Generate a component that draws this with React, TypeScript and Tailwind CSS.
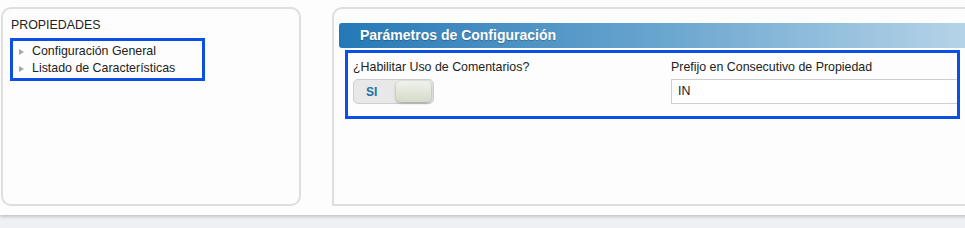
import React from "react";

export default function App() {
  const font = { fontFamily: '"Liberation Sans", Arial, sans-serif' };
  return (
    <div className="w-[965px] h-[228px] overflow-hidden bg-[#eef0f4]" style={font}>
      <div className="w-[1000px] h-[215px] bg-[#fdfdfd] shadow-[0_2px_3px_rgba(0,0,0,0.18)] pt-[7px] pl-[1px] flex gap-[31px]">
        {/* Left panel */}
        <div className="w-[300px] h-[199px] border-2 border-[#dedede] rounded-[10px] bg-[#fdfdfd] pl-[8px] pt-[9px]">
          <div className="text-[12.4px] leading-[15px] text-[#222]">PROPIEDADES</div>
          <div className="mt-[5px] -ml-[1px] w-[195px] h-[43px] border-[3px] border-[#0b50e6] pl-[6px] pt-[2px]">
            <div className="flex items-center h-[17px] text-[12.4px] text-[#222]">
              <span className="w-[13px] flex items-center">
                <span className="inline-block w-0 h-0 border-y-[3.5px] border-y-transparent border-l-[5px] border-l-[#a8a8a8]" />
              </span>
              <span>Configuración General</span>
            </div>
            <div className="flex items-center h-[17px] text-[12.4px] text-[#222]">
              <span className="w-[13px] flex items-center">
                <span className="inline-block w-0 h-0 border-y-[3.5px] border-y-transparent border-l-[5px] border-l-[#a8a8a8]" />
              </span>
              <span>Listado de Características</span>
            </div>
          </div>
        </div>
        {/* Right panel */}
        <div className="w-[660px] h-[199px] border-2 border-[#dedede] rounded-tl-[10px] bg-[#fdfdfd] pl-[5px] pt-[14px]">
          <div className="h-[25px] rounded-l-[3px] bg-gradient-to-r from-[#2379b6] via-[#6aa6cf] to-[#bcd7ea] flex items-center pl-[21px]">
            <span className="text-white font-bold text-[14px] [text-shadow:0_1px_1px_rgba(0,0,0,0.25)]">
              Parámetros de Configuración
            </span>
          </div>
          <div className="ml-[6px] mt-[2px] w-[615px] h-[69px] border-[3px] border-[#0b50e6] overflow-hidden flex pt-[7px]">
            <div className="w-[323px] shrink-0 pl-[5px]">
              <div className="text-[12.4px] leading-[15px] text-[#222]">¿Habilitar Uso de Comentarios?</div>
              <div className="mt-[4px] w-[81px] h-[25px] rounded-[5px] bg-[#e8e8e8] border border-[#cfcfcf] flex items-center pl-[12px] relative">
                <span className="text-[12px] font-bold text-[#1c6fa6]">SI</span>
                <span className="absolute left-[42px] top-[1px] w-[35px] h-[21px] rounded-[5px] bg-gradient-to-b from-[#f0f2ec] to-[#d3dbc9] shadow-[0_1px_3px_rgba(0,0,0,0.35)]" />
              </div>
            </div>
            <div className="flex-1 min-w-0">
              <div className="text-[12.4px] leading-[15px] text-[#222]">Prefijo en Consecutivo de Propiedad</div>
              <div className="mt-[4px] w-[330px] h-[25px] border border-[#cfcfcf] bg-white flex items-center pl-[6px] text-[12.4px] text-[#222]">
                IN
              </div>
            </div>
          </div>
        </div>
      </div>
    </div>
  );
}
